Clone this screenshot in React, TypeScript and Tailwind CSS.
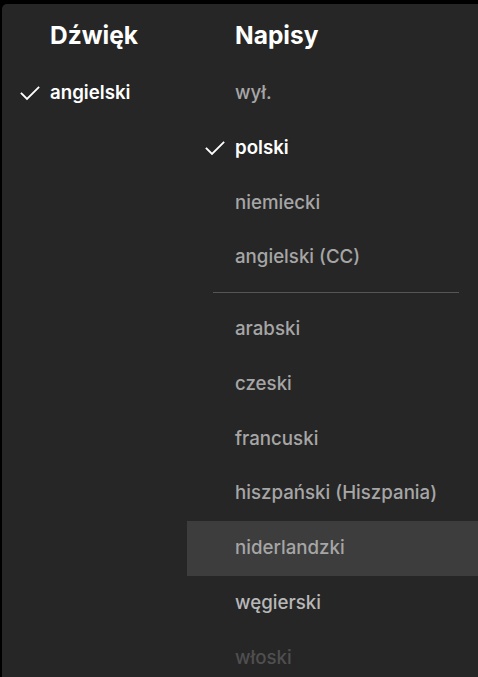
import { Fragment } from 'react';

interface Item {
  label: string;
  selected?: boolean;
  hover?: boolean;
  tone?: 'light' | 'faded';
}

const audio: Item[] = [{ label: 'angielski', selected: true }];

const subtitleGroups: Item[][] = [
  [
    { label: 'wył.' },
    { label: 'polski', selected: true },
    { label: 'niemiecki' },
    { label: 'angielski (CC)' },
  ],
  [
    { label: 'arabski' },
    { label: 'czeski' },
    { label: 'francuski' },
    { label: 'hiszpański (Hiszpania)' },
    { label: 'niderlandzki', hover: true },
    { label: 'węgierski', tone: 'light' },
    { label: 'włoski', tone: 'faded' },
  ],
];

function Check() {
  return (
    <svg className="w-[20px] h-[20px]" viewBox="0 0 20 20" fill="none">
      <path d="M1.5 10.5l5.5 5.5L18.5 4.5" stroke="#ffffff" strokeWidth="1.8" strokeLinecap="square" />
    </svg>
  );
}

function Row({ item }: { item: Item }) {
  const color = item.selected
    ? 'text-white font-semibold'
    : item.tone === 'faded'
      ? 'text-[#4f4f4f] font-medium'
      : item.tone === 'light'
        ? 'text-[#b8b8b8] font-medium'
        : 'text-[#a6a6a6] font-medium';

  return (
    <div className={`h-[54.75px] flex items-center ${item.hover ? 'bg-[#3d3d3d]' : ''}`}>
      <div className="w-[48px] pl-[18px] flex items-center">{item.selected && <Check />}</div>
      <span className={`text-[18.7px] leading-none whitespace-nowrap ${color}`}>{item.label}</span>
    </div>
  );
}

export default function App() {
  return (
    <div
      className="w-[478px] h-[677px] bg-black pt-[4px] pl-[2px] overflow-hidden"
      style={{ fontFamily: 'Inter, "Noto Sans", sans-serif' }}
    >
      <div className="h-full bg-[#262626] rounded-tl-[5px] flex">
        {/* Audio */}
        <div className="w-[185px] shrink-0">
          <div className="h-[62px] pl-[48px] flex items-center">
            <h2 className="text-[24.5px] font-bold text-white leading-none">Dźwięk</h2>
          </div>
          {audio.map((item) => (
            <Row key={item.label} item={item} />
          ))}
        </div>

        {/* Subtitles */}
        <div className="flex-1">
          <div className="h-[62px] pl-[48px] flex items-center">
            <h2 className="text-[24.5px] font-bold text-white leading-none">Napisy</h2>
          </div>
          {subtitleGroups.map((group, i) => (
            <Fragment key={i}>
              {i > 0 && <div className="ml-[26px] mr-[19px] mt-[7px] mb-[9px] h-px bg-[#555555]" />}
              {group.map((item) => (
                <Row key={item.label} item={item} />
              ))}
            </Fragment>
          ))}
        </div>
      </div>
    </div>
  );
}
